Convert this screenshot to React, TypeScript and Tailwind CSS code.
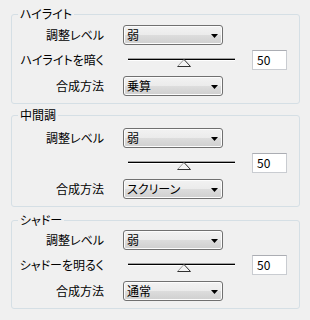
import React from "react";

const font = {
  fontFamily: '"Noto Sans CJK JP", "Noto Sans", sans-serif',
};

function Select({ value }: { value: string }) {
  return (
    <div className="relative h-[20px] w-[100px] rounded-[3px] border border-[#707070] bg-[linear-gradient(to_bottom,#f2f2f2_0%,#ebebeb_50%,#dddddd_50%,#cfcfcf_100%)] shadow-[inset_0_0_0_1px_#fcfcfc] flex items-center pl-[3px] pr-[3px]">
      <span className="flex-1 text-[12px] leading-none text-black [font-feature-settings:'palt']">{value}</span>
      <svg width="7" height="4" viewBox="0 0 7 4" className="mr-[1px] mt-[1px]">
        <polygon points="0,0 7,0 3.5,4" fill="#000" />
      </svg>
    </div>
  );
}

function Slider() {
  return (
    <svg width="117" height="20" viewBox="0 0 117 20">
      <rect x="5" y="8" width="107" height="1" fill="#a0a0a0" />
      <rect x="5" y="9" width="107" height="1" fill="#000" />
      <rect x="5" y="10" width="107" height="1" fill="#ffffff" />
      <polygon points="54.5,16.5 61,9.5 67.5,16.5" fill="#f4f4f4" />
      <polyline points="54.5,16.5 61,9.5" fill="none" stroke="#9a9a9a" strokeWidth="1" />
      <polyline points="61,9.5 67.5,16.5 54.5,16.5" fill="none" stroke="#303030" strokeWidth="1" />
    </svg>
  );
}

function NumInput() {
  return (
    <div className="h-[20px] w-[35px] border border-[#c9ccd1] border-t-[#abadb3] bg-white flex items-center pl-[4px] text-[12px] leading-none text-black">
      50
    </div>
  );
}

function Label({ text }: { text: string }) {
  return (
    <div className="w-[92px] text-right text-[12px] leading-none text-black [font-feature-settings:'palt'] whitespace-nowrap">
      {text}
    </div>
  );
}

function Group({
  title,
  sliderLabel,
  mode,
  pt,
  className,
}: {
  title: string;
  sliderLabel: string;
  mode: string;
  pt: string;
  className?: string;
}) {
  return (
    <fieldset
      className={`w-[289px] rounded-[3px] border border-[#d5dfe5] pb-[7px] ${className ?? ""}`}
    >
      <legend className="ml-[6px] px-[2px] text-[12px] leading-[14px] text-black [font-feature-settings:'palt']">
        {title}
      </legend>
      <div className={`flex flex-col ${pt}`}>
        <div className="flex h-[20px] items-center">
          <Label text="調整レベル" />
          <div className="ml-[19px]">
            <Select value="弱" />
          </div>
        </div>
        <div className="mt-[5px] flex h-[20px] items-center">
          <Label text={sliderLabel} />
          <div className="ml-[19px] flex items-center">
            <Slider />
            <div className="ml-[12px]">
              <NumInput />
            </div>
          </div>
        </div>
        <div className="mt-[6px] flex h-[20px] items-center">
          <Label text="合成方法" />
          <div className="ml-[19px]">
            <Select value={mode} />
          </div>
        </div>
      </div>
    </fieldset>
  );
}

export default function App() {
  return (
    <div
      className="h-[320px] w-[310px] overflow-hidden bg-[#f0f0f0] pl-[11px] pt-[7px]"
      style={font}
    >
      <Group title="ハイライト" sliderLabel="ハイライトを暗く" mode="乗算" pt="pt-[4px]" />
      <Group title="中間調" sliderLabel="" mode="スクリーン" pt="pt-[6px]" className="mt-[4px]" />
      <Group title="シャドー" sliderLabel="シャドーを明るく" mode="通常" pt="pt-[3px]" className="mt-[6px]" />
    </div>
  );
}
